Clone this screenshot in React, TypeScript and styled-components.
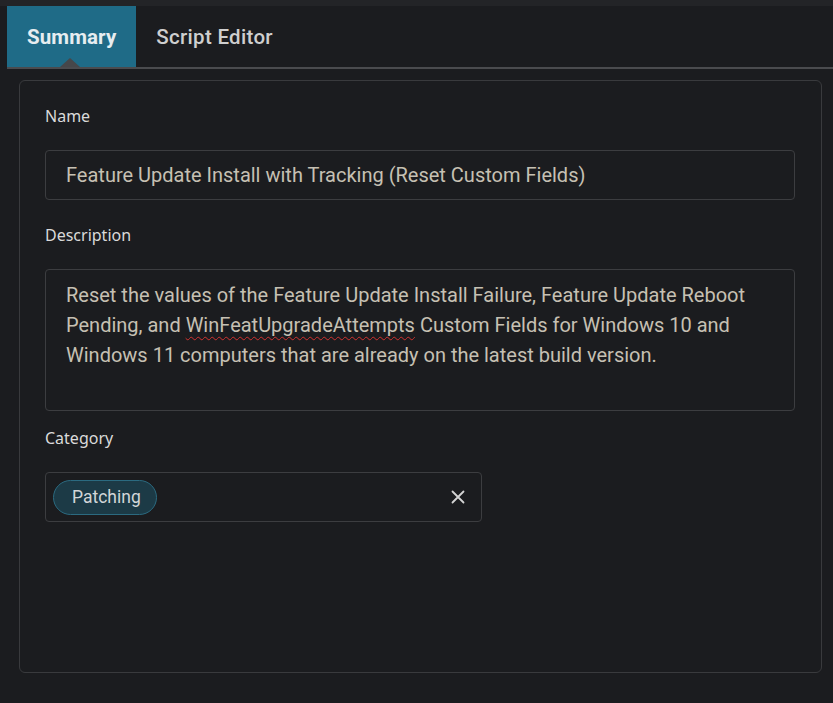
import styled, { createGlobalStyle } from 'styled-components'

const GlobalStyle = createGlobalStyle`
  html, body {
    margin: 0;
    padding: 0;
    background: #1b1c1f;
  }
  body {
    font-family: Roboto, "Noto Sans", sans-serif;
  }
`

const Page = styled.div`
  width: 833px;
  height: 703px;
  box-sizing: border-box;
  border-top: 6px solid #232427;
  padding-left: 7px;
  background: #1b1c1f;
  display: flex;
  flex-direction: column;
`

const TabBar = styled.div`
  display: flex;
  height: 61px;
  border-bottom: 2px solid #4a4b4e;
`

const Tab = styled.div<{ $active?: boolean }>`
  position: relative;
  display: flex;
  align-items: center;
  padding: 0 20px;
  font-size: 20.5px;
  font-weight: ${(p) => (p.$active ? 700 : 500)};
  color: ${(p) => (p.$active ? '#e6edf0' : '#cfcfcf')};
  background: ${(p) => (p.$active ? '#1f6b87' : 'transparent')};
  letter-spacing: ${(p) => (p.$active ? '0.1px' : '0.3px')};

  ${(p) =>
    p.$active &&
    `
    &::after {
      content: '';
      position: absolute;
      left: 53px;
      bottom: 0;
      border-left: 10px solid transparent;
      border-right: 10px solid transparent;
      border-bottom: 9px solid #46474a;
    }
  `}
`

const Card = styled.div`
  margin: 11px 11px 0 12px;
  height: 593px;
  box-sizing: border-box;
  border: 1px solid #393a3d;
  border-radius: 6px;
  padding: 25px 26px 25px 25px;
`

const Field = styled.div<{ $gap: number }>`
  display: flex;
  flex-direction: column;
  margin-bottom: ${(p) => p.$gap}px;
`

const Label = styled.div`
  font-family: "Noto Sans", "Open Sans", sans-serif;
  font-size: 16px;
  line-height: 20px;
  color: #dadada;
  margin-bottom: 24px;
`

const Input = styled.div`
  height: 50px;
  box-sizing: border-box;
  border: 1px solid #3c3d40;
  border-radius: 4px;
  padding: 0 20px;
  display: flex;
  align-items: center;
  font-size: 20px;
  color: #c6c0b3;
`

const TextArea = styled.div`
  height: 142px;
  box-sizing: border-box;
  border: 1px solid #3c3d40;
  border-radius: 4px;
  padding: 10px 20px;
  font-size: 20px;
  line-height: 30px;
  color: #c6c0b3;
`

const Misspelled = styled.span`
  text-decoration: underline wavy #d0322f;
  text-decoration-thickness: 1px;
  text-underline-offset: 4px;
`

const Select = styled.div`
  width: 437px;
  height: 50px;
  box-sizing: border-box;
  border: 1px solid #3c3d40;
  border-radius: 4px;
  padding: 0 16px 0 7px;
  display: flex;
  align-items: center;
  justify-content: space-between;
`

const Chip = styled.div`
  height: 35px;
  box-sizing: border-box;
  padding: 0 15px 0 18px;
  border: 1px solid #2b6a80;
  border-radius: 18px;
  background: #1c3a46;
  display: flex;
  align-items: center;
  font-size: 17.5px;
  color: #d2d6d8;
`

const Clear = styled.svg`
  width: 14px;
  height: 14px;
`

export default function App() {
  return (
    <>
      <GlobalStyle />
      <Page>
        <TabBar>
          <Tab $active>Summary</Tab>
          <Tab>Script Editor</Tab>
        </TabBar>
        <Card>
          <Field $gap={25}>
            <Label>Name</Label>
            <Input>Feature Update Install with Tracking (Reset Custom Fields)</Input>
          </Field>
          <Field $gap={17}>
            <Label>Description</Label>
            <TextArea>
              Reset the values of the Feature Update Install Failure, Feature Update Reboot
              <br />
              Pending, and <Misspelled>WinFeatUpgradeAttempts</Misspelled> Custom Fields for Windows 10 and
              <br />
              Windows 11 computers that are already on the latest build version.
            </TextArea>
          </Field>
          <Field $gap={0}>
            <Label>Category</Label>
            <Select>
              <Chip>Patching</Chip>
              <Clear viewBox="0 0 14 14">
                <path d="M1.5 1.5 L12.5 12.5 M12.5 1.5 L1.5 12.5" stroke="#d4d4d4" strokeWidth="1.8" strokeLinecap="round" />
              </Clear>
            </Select>
          </Field>
        </Card>
      </Page>
    </>
  )
}
